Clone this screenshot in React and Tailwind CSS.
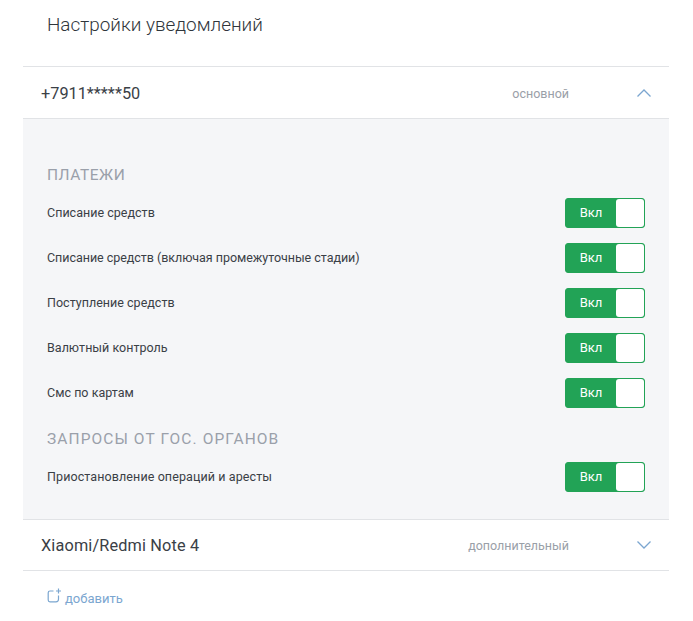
const font = { fontFamily: "Roboto, sans-serif" };

function Toggle() {
  return (
    <div className="flex h-[30px] w-[80px] shrink-0 rounded-[3px] border border-[#22a356] bg-[#22a356]">
      <div className="flex w-[50px] items-center justify-center text-[13px] text-white">Вкл</div>
      <div className="flex-1 rounded-[3px] bg-white" />
    </div>
  );
}

function Row({ label, className = "", labelClass = "tracking-[0.02px]" }) {
  return (
    <div className={`flex h-[30px] items-center justify-between ${className}`}>
      <span className={`text-[12.5px] leading-[30px] text-[#3a4046] ${labelClass}`}>{label}</span>
      <Toggle />
    </div>
  );
}

function Chevron({ up }) {
  return (
    <svg width="16" height="10" viewBox="0 0 16 10" fill="none" stroke="#7ba6d0" strokeWidth="1.3">
      {up ? <path d="M1.5 8.5 L8 2 L14.5 8.5" /> : <path d="M1.5 1.5 L8 8 L14.5 1.5" />}
    </svg>
  );
}

function Header({ name, tag, up, h, nameClass = "" }) {
  return (
    <div className={`flex items-center justify-between pl-[18px] pr-[17px] ${h}`}>
      <span className={`pt-[3px] text-[16.3px] text-[#3a4046] ${nameClass}`}>{name}</span>
      <div className="flex items-center gap-[67px]">
        <span className="pt-[3px] text-[12.5px] text-[#9aa0a8]">{tag}</span>
        <Chevron up={up} />
      </div>
    </div>
  );
}

export default function App() {
  return (
    <div className="h-[621px] w-[693px] bg-white" style={font}>
      <div className="flex h-[66px] items-start pl-[47px] pt-[12px] text-[18.9px] font-light leading-[26px] text-[#2f353b]">
        Настройки уведомлений
      </div>
      <div className="ml-[23px] w-[646px]">
        <div className="border-y border-[#e1e3e6]">
          <Header name="+7911*****50" tag="основной" up h="h-[51px]" />
        </div>
        <div className="h-[400px] bg-[#f5f6f8] pl-[24px] pr-[24px] pt-[46px]">
          <h3 className="text-[15.5px] leading-[20px] tracking-[0.55px] text-[#9aa0aa]">ПЛАТЕЖИ</h3>
          <div className="mt-[13px] flex flex-col gap-[15px]">
            <Row label="Списание средств" />
            <Row label="Списание средств (включая промежуточные стадии)" labelClass="tracking-[-0.04px]" />
            <Row label="Поступление средств" />
            <Row label="Валютный контроль" />
            <Row label="Смс по картам" />
          </div>
          <h3 className="mt-[21px] text-[15.5px] leading-[20px] tracking-[1.09px] text-[#9aa0aa]">ЗАПРОСЫ ОТ ГОС. ОРГАНОВ</h3>
          <Row label="Приостановление операций и аресты" className="mt-[13px]" labelClass="tracking-[0.1px]" />
        </div>
        <div className="border-y border-[#e1e3e6]">
          <Header name="Xiaomi/Redmi Note 4" tag="дополнительный" h="h-[50px]" nameClass="tracking-[0.15px]" />
        </div>
        <div className="flex items-center gap-[3px] pl-[24px] pt-[18px] text-[13px] text-[#7ba6d0]">
          <svg width="15" height="15" viewBox="0 0 15 15" fill="none" stroke="#7ba6d0" strokeWidth="1.2" className="-translate-y-[3px]">
            <path d="M6.5 3 H3 A1.8 1.8 0 0 0 1.2 4.8 V12 A1.8 1.8 0 0 0 3 13.8 H9 A2.5 2.5 0 0 0 11.5 11.3 V7.5" />
            <path d="M11.5 0.5 V5.5 M9 3 H14" />
          </svg>
          <span>добавить</span>
        </div>
      </div>
    </div>
  );
}
